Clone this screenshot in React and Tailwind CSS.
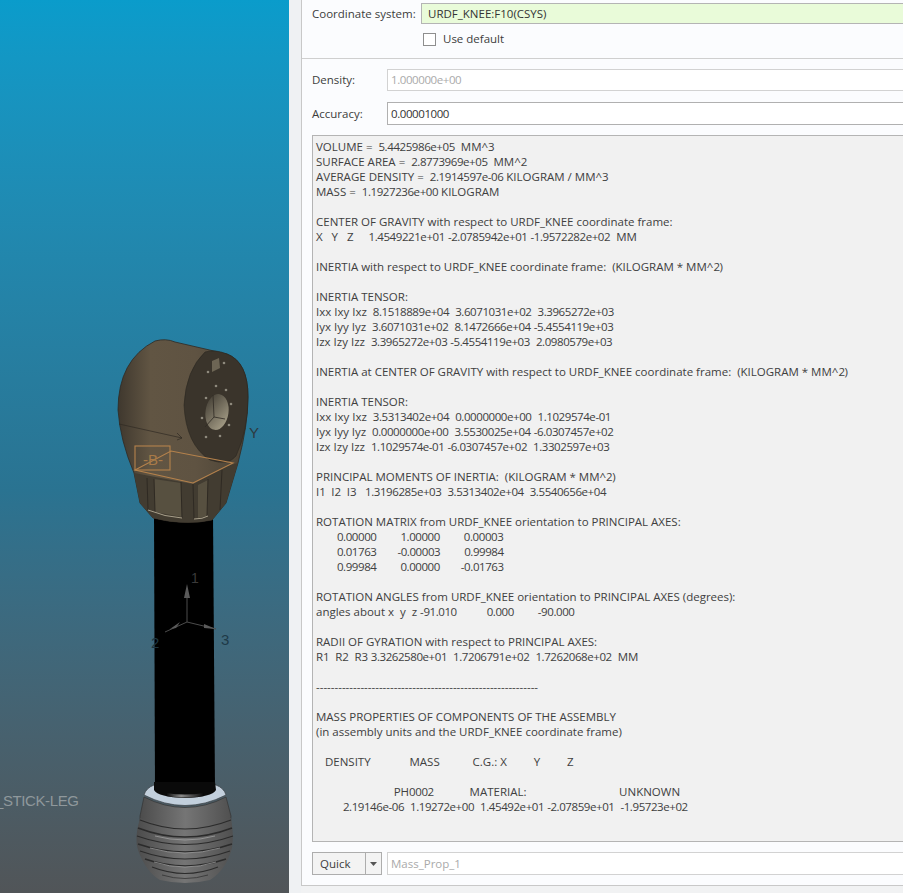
import React from "react";

const report = [
  "VOLUME =  5.4425986e+05  MM^3",
  "SURFACE AREA =  2.8773969e+05  MM^2",
  "AVERAGE DENSITY =  2.1914597e-06 KILOGRAM / MM^3",
  "MASS =  1.1927236e+00 KILOGRAM",
  "",
  "CENTER OF GRAVITY with respect to URDF_KNEE coordinate frame:",
  "X   Y   Z     1.4549221e+01 -2.0785942e+01 -1.9572282e+02  MM",
  "",
  "INERTIA with respect to URDF_KNEE coordinate frame:  (KILOGRAM * MM^2)",
  "",
  "INERTIA TENSOR:",
  "Ixx Ixy Ixz  8.1518889e+04  3.6071031e+02  3.3965272e+03",
  "Iyx Iyy Iyz  3.6071031e+02  8.1472666e+04 -5.4554119e+03",
  "Izx Izy Izz  3.3965272e+03 -5.4554119e+03  2.0980579e+03",
  "",
  "INERTIA at CENTER OF GRAVITY with respect to URDF_KNEE coordinate frame:  (KILOGRAM * MM^2)",
  "",
  "INERTIA TENSOR:",
  "Ixx Ixy Ixz  3.5313402e+04  0.0000000e+00  1.1029574e-01",
  "Iyx Iyy Iyz  0.0000000e+00  3.5530025e+04 -6.0307457e+02",
  "Izx Izy Izz  1.1029574e-01 -6.0307457e+02  1.3302597e+03",
  "",
  "PRINCIPAL MOMENTS OF INERTIA:  (KILOGRAM * MM^2)",
  "I1  I2  I3   1.3196285e+03  3.5313402e+04  3.5540656e+04",
  "",
  "ROTATION MATRIX from URDF_KNEE orientation to PRINCIPAL AXES:",
  "       0.00000        1.00000        0.00003",
  "       0.01763       -0.00003        0.99984",
  "       0.99984        0.00000       -0.01763",
  "",
  "ROTATION ANGLES from URDF_KNEE orientation to PRINCIPAL AXES (degrees):",
  "angles about x  y  z -91.010          0.000        -90.000",
  "",
  "RADII OF GYRATION with respect to PRINCIPAL AXES:",
  "R1  R2  R3 3.3262580e+01  1.7206791e+02  1.7262068e+02  MM",
  "",
  "------------------------------------------------------------",
  "",
  "MASS PROPERTIES OF COMPONENTS OF THE ASSEMBLY",
  "(in assembly units and the URDF_KNEE coordinate frame)",
  "",
  "   DENSITY             MASS           C.G.: X         Y         Z",
  "",
  "                          PH0002            MATERIAL:                               UNKNOWN",
  "         2.19146e-06  1.19272e+00  1.45492e+01 -2.07859e+01  -1.95723e+02",
];

// numbers are set tighter than words in the reference
function Line({ text }) {
  const parts = text.split(/(-?\d[\d.]*(?:e[+-]\d+)?)/);
  return parts.map((p, i) =>
    i % 2 ? (
      <span key={i} className="tracking-[-0.42px]">{p}</span>
    ) : (
      <span key={i}>{p}</span>
    )
  );
}

function Model() {
  return (
    <svg width="289" height="893" viewBox="0 0 289 893" className="block">
      <defs>
        <linearGradient id="side" x1="0" x2="1" y1="0" y2="0">
          <stop offset="0" stopColor="#3f382e" />
          <stop offset="0.25" stopColor="#615543" />
          <stop offset="0.6" stopColor="#5f5342" />
          <stop offset="1" stopColor="#4a4235" />
        </linearGradient>
        <linearGradient id="hole" x1="0" x2="1" y1="0" y2="1">
          <stop offset="0" stopColor="#3d382f" />
          <stop offset="1" stopColor="#b0a890" />
        </linearGradient>
        <linearGradient id="ball" x1="0" x2="1" y1="0" y2="0">
          <stop offset="0" stopColor="#4c4c4c" />
          <stop offset="0.5" stopColor="#757575" />
          <stop offset="1" stopColor="#505050" />
        </linearGradient>
        <linearGradient id="shine" x1="0" x2="1" y1="0" y2="0">
          <stop offset="0" stopColor="#050505" />
          <stop offset="0.4" stopColor="#8a8a8a" />
          <stop offset="1" stopColor="#050505" />
        </linearGradient>
      </defs>

      {/* tube */}
      <path d="M154 515 L155 790 L215 790 L213 515 Z" fill="#000" />

      {/* foot */}
      <path d="M144 795 Q146 788 154 785 L216 785 Q224 788 226 795 Q185 816 144 795 Z" fill="#c2cfdc" stroke="#3a3f44" strokeWidth="0.7" />
      <path d="M154 782 L154 790 Q158 797 185 798 Q212 797 216 790 L215 782 Z" fill="#0a0a0a" />
      <path d="M166 793 Q185 796 204 793 L204 796 Q185 799 166 796 Z" fill="url(#shine)" />
      <path d="M144 797 Q185 818 226 797 L231 816 L230 828 L140 828 L140 816 Z" fill="url(#ball)" stroke="#333" strokeWidth="0.7" />
      <path d="M140 818 Q134 838 138 850 Q146 872 160 880 Q185 886 210 880 Q226 870 232 848 Q234 834 231 818 Q185 836 140 818 Z" fill="url(#ball)" />
      <g stroke="#2b2b2b" fill="none" strokeWidth="1.1">
        <path d="M140 820 Q185 838 231 820" />
        <path d="M138 828 Q185 846 232 828" strokeWidth="1.6" />
        <path d="M137 836 Q185 853 233 836" />
        <path d="M138 844 Q185 860 232 844" strokeWidth="1.6" />
        <path d="M140 851 Q185 867 230 851" />
        <path d="M145 859 Q185 873 226 859" strokeWidth="1.6" />
        <path d="M152 867 Q185 880 218 867" />
        <path d="M162 875 Q185 882 208 875" strokeWidth="0.7" />
      </g>
      <g stroke="#a8a8a8" fill="none" strokeWidth="0.7">
        <path d="M155 836 Q185 844 215 836" />
        <path d="M150 848 Q185 858 220 848" />
        <path d="M154 862 Q185 872 216 862" />
      </g>

      {/* head */}
      <path d="M155 341 Q166 338 175 342 L227 354 Q248 362 248 397 Q248 425 238 463 L226 503 L212 520 Q185 526 153 518 L140 503 L134 473 Q120 440 118 410 Q118 360 155 341 Z" fill="url(#side)" stroke="#2f2a23" strokeWidth="0.8" />
      <path d="M134 473 L193 484 L227 466 L238 463 L226 503 L212 520 Q185 526 153 518 L140 503 Z" fill="#423c31" />
      <path d="M154 479 L181 483 L182 517 L155 512 Z M198 485 L208 480 L207 516 L198 518 Z" fill="#575040" />
      <g fill="none" stroke="#2f2a23" strokeWidth="1">
        <path d="M147 478 L148 510 M154 479 L155 512 M181 482 L182 518 M193 484 L194 519 M208 479 L207 516 M222 470 L220 510" />
      </g>
      <path d="M148 510 Q165 517 182 518 M194 519 Q203 519 208 516" stroke="#a89f8a" strokeWidth="1" fill="none" />

      {/* disc face */}
      <path d="M227 354 Q248 362 248 397 Q248 430 236 456 Q228 466 210 460 Q186 445 184 405 Q186 370 205 352 Q215 349 227 354 Z" fill="#3a342b" stroke="#2a2620" strokeWidth="0.6" />
      <ellipse cx="217" cy="412" rx="11.5" ry="18" fill="url(#hole)" transform="rotate(8 217 412)" />
      <path d="M213 395 L214 417 L205 427 M214 417 L225 419" stroke="#2f2a23" strokeWidth="0.8" fill="none" />
      <g fill="#8f8a7d">
        <circle cx="216" cy="386" r="1.3" />
        <circle cx="226" cy="390" r="1.3" />
        <circle cx="231" cy="404" r="1.3" />
        <circle cx="229" cy="425" r="1.3" />
        <circle cx="220" cy="436" r="1.3" />
        <circle cx="206" cy="437" r="1.3" />
        <circle cx="202" cy="418" r="1.3" />
        <circle cx="206" cy="398" r="1.3" />
        <circle cx="208" cy="372" r="1.3" />
        <circle cx="224" cy="363" r="1.3" />
      </g>
      <path d="M212 361 L219 358 L220 368 L212 372 Z" fill="#6d6554" />
      <path d="M119 424 L182 438 M177 433 L182 438 L177 440" stroke="#2f2a23" strokeWidth="0.7" fill="none" />

      {/* datum plane */}
      <g fill="none" stroke="#b5824c" strokeWidth="1.1">
        <rect x="135" y="446" width="35" height="24" />
        <path d="M135 470 L171 451 L233 463 L193 483 Z" />
      </g>
      <text x="143" y="465" fontFamily="Liberation Sans" fontSize="15" fill="#a87a48">-B-</text>

      {/* axis triad */}
      <g stroke="#4c4c4c" strokeWidth="1" fill="none">
        <path d="M187 622 L187 590 M187 622 L165 632 M187 622 L216 629" />
      </g>
      <path d="M187 584 L184 598 L190 598 Z M170 629 L180 622 L176 628 Z M216 629 L204 624 L204 628 Z" fill="#5a5a5a" />
      <text x="191" y="583" fontFamily="Liberation Sans" fontSize="14" fill="#3a3a3a">1</text>
      <text x="151" y="648" fontFamily="Liberation Sans" fontSize="15" fill="#1e3540">2</text>
      <text x="221" y="645" fontFamily="Liberation Sans" fontSize="15" fill="#1e3a48">3</text>
      <text x="249" y="438" fontFamily="Liberation Sans" fontSize="15" fill="#2e3a40">Y</text>
      <text x="-5" y="806" fontFamily="Liberation Sans" fontSize="15" fill="#8f989c" letterSpacing="-0.4">_STICK-LEG</text>
    </svg>
  );
}

export default function App() {
  return (
    <div className="flex w-[903px] h-[893px] overflow-hidden bg-[#f1f2f3] font-['Open_Sans',sans-serif] text-[11.5px] text-[#3c3c3c]">
      <div className="w-[289px] shrink-0 bg-gradient-to-b from-[#0a9ccb] via-[#2a7391] via-[55%] to-[#515558]">
        <Model />
      </div>

      <div className="w-[12px] shrink-0 bg-[#eff1f3]" />

      <div className="w-[640px] shrink-0 h-[886px] border-l border-b border-[#c8c8c8] bg-[#fbfcfe] flex flex-col">
        <div className="h-[59px] shrink-0 border-b border-[#cfcfcf] px-[10px] pt-[3px]">
          <div className="flex items-center h-[21px]">
            <span className="w-[109px] shrink-0">Coordinate system:</span>
            <div className="flex-1 h-[21px] border border-[#b4b4b4] bg-[#e9fbd9] pl-[6px] flex items-center text-[#333]">URDF_KNEE:F10(CSYS)</div>
          </div>
          <div className="flex items-center ml-[111px] mt-[8px] h-[14px]">
            <div className="w-[13px] h-[13px] border border-[#8e8e8e] bg-white" />
            <span className="ml-[7px]">Use default</span>
          </div>
        </div>

        <div className="flex items-center pl-[10px] h-[22px] mt-[10px] shrink-0">
          <span className="w-[75px] shrink-0">Density:</span>
          <div className="flex-1 h-[22px] border border-[#d2d2d2] bg-white pl-[3px] flex items-center text-[#aaaaaa]"><Line text="1.000000e+00" /></div>
        </div>
        <div className="flex items-center pl-[10px] h-[23px] mt-[11px] shrink-0">
          <span className="w-[75px] shrink-0">Accuracy:</span>
          <div className="flex-1 h-[23px] border border-[#b0b0b0] bg-white pl-[3px] flex items-center text-[#333]"><Line text="0.00001000" /></div>
        </div>

        <div className="ml-[10px] mt-[10px] h-[707px] shrink-0 border border-[#b4b4b4] bg-[#f1f1f1] pl-[3px] pt-[3px] overflow-hidden">
          {report.map((line, i) => (
            <div key={i} className="h-[15px] leading-[15px] whitespace-pre text-[#404040]"><Line text={line} /></div>
          ))}
        </div>

        <div className="flex items-center pl-[10px] mt-[10px] h-[23px] shrink-0">
          <div className="w-[70px] h-[23px] border border-[#adadad] bg-[#f3f3f3] flex">
            <span className="w-[53px] pl-[7px] leading-[21px] border-r border-[#adadad]">Quick</span>
            <span className="flex-1 flex items-center justify-center">
              <svg width="7" height="4" viewBox="0 0 7 4"><path d="M0 0H7L3.5 4Z" fill="#555" /></svg>
            </span>
          </div>
          <div className="flex-1 ml-[5px] h-[23px] border border-[#d2d2d2] bg-white pl-[3px] flex items-center text-[#aaaaaa]">Mass_Prop_1</div>
        </div>
      </div>
    </div>
  );
}
